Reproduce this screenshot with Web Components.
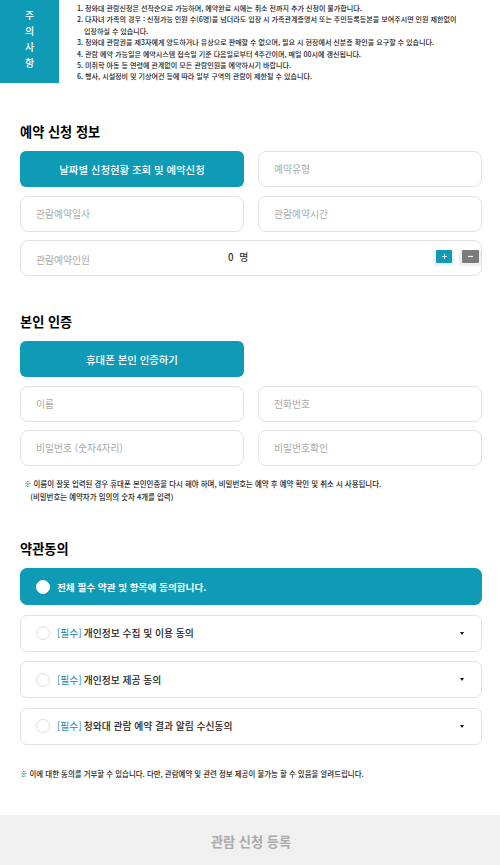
<!DOCTYPE html>
<html lang="ko">
<head>
<meta charset="utf-8">
<title>관람 신청</title>
<style>
  html, body { margin: 0; padding: 0; background: #fff; }
  body { width: 500px; font-family: "Noto Sans CJK KR", "Noto Sans", sans-serif; color: #111; }
</style>
</head>
<body>
<rv-notice></rv-notice>

<rv-section heading="예약 신청 정보" top="39">
  <rv-button>날짜별 신청현황 조회 및 예약신청</rv-button>
  <rv-field>예약유형</rv-field>
  <rv-field>관람예약일사</rv-field>
  <rv-field>관람예약시간</rv-field>
  <rv-counter label="관람예약인원" value="0" unit="명"></rv-counter>
</rv-section>

<rv-section heading="본인 인증" top="36">
  <rv-button>휴대폰 본인 인증하기</rv-button>
  <span></span>
  <rv-field>이름</rv-field>
  <rv-field>전화번호</rv-field>
  <rv-field>비밀번호 (숫자4자리)</rv-field>
  <rv-field>비밀번호확인</rv-field>
  <rv-note slot="after">※ 이름이 잘못 입력된 경우 휴대폰 본인인증을 다시 해야 하며, 비밀번호는 예약 후 예약 확인 및 취소 시 사용됩니다.<br>&nbsp;&nbsp;&nbsp;(비밀번호는 예약자가 임의의 숫자 4개를 입력)</rv-note>
</rv-section>

<rv-terms>
  <rv-agree all>전체 필수 약관 및 항목에 동의합니다.</rv-agree>
  <rv-agree>개인정보 수집 및 이용 동의</rv-agree>
  <rv-agree>개인정보 제공 동의</rv-agree>
  <rv-agree>청와대 관람 예약 결과 알림 수신동의</rv-agree>
</rv-terms>

<rv-submit>관람 신청 등록</rv-submit>

<script>
  const FONT = '"Noto Sans CJK KR", "Noto Sans", sans-serif';
  const TEAL = '#0f9ab5';

  // 상단 주의사항 박스
  class RvNotice extends HTMLElement {
    connectedCallback() {
      const lines = [
        '1. 청와대 관람신청은 선착순으로 가능하며, 예약완료 시에는 취소 전까지 추가 신청이 불가합니다.',
        '2. 다자녀 가족의 경우 : 신청가능 인원 수(6명)을 넘더라도 입장 시 가족관계증명서 또는 주민등록등본을 보여주시면 인원 제한없이',
        '<span class="in">입장하실 수 있습니다.</span>',
        '3. 청와대 관람권을 제3자에게 양도하거나 유상으로 판매할 수 없으며, 필요 시 현장에서 신분증 확인을 요구할 수 있습니다.',
        '4. 관람 예약 가능일은 예약시스템 접속일 기준 다음일로부터 4주간이며, 매일 00시에 갱신됩니다.',
        '5. 미취학 아동 등 연령에 관계없이 모든 관람인원을 예약하시기 바랍니다.',
        '6. 행사, 시설정비 및 기상여건 등에 따라 일부 구역의 관람이 제한될 수 있습니다.'
      ];
      this.attachShadow({ mode: 'open' }).innerHTML = `
        <style>
          :host { display: flex; height: 83px; font-family: ${FONT}; }
          .tag {
            width: 59px; background: ${TEAL}; color: #fff;
            display: flex; flex-direction: column; align-items: center; justify-content: center;
            font-size: 10px; font-weight: 500; line-height: 16.2px; padding-bottom: 5px; box-sizing: border-box;
          }
          .list { padding: 3px 0 0 18px; font-size: 7.05px; line-height: 11.4px; color: #222; white-space: nowrap; font-weight: 500; }
          .in { padding-left: 7px; }
        </style>
        <div class="tag"><span>주</span><span>의</span><span>사</span><span>항</span></div>
        <div class="list">${lines.map(l => `<div>${l}</div>`).join('')}</div>`;
    }
  }

  // 섹션: 제목 + 2열 그리드
  class RvSection extends HTMLElement {
    connectedCallback() {
      const top = this.getAttribute('top') || 0;
      this.attachShadow({ mode: 'open' }).innerHTML = `
        <style>
          :host { display: block; padding: ${top}px 18px 0 20px; font-family: ${FONT}; }
          h2 { margin: 0 0 10px; font-size: 13.2px; line-height: 19px; font-weight: 700; color: #000; }
          .grid { display: grid; grid-template-columns: 224px 224px; column-gap: 14px; row-gap: 8.5px; }
        </style>
        <h2>${this.getAttribute('heading')}</h2>
        <div class="grid"><slot></slot></div>
        <slot name="after"></slot>`;
    }
  }

  class RvButton extends HTMLElement {
    connectedCallback() {
      this.attachShadow({ mode: 'open' }).innerHTML = `
        <style>
          :host {
            display: flex; align-items: center; justify-content: center; height: 36px;
            background: ${TEAL}; color: #fff; border-radius: 6px;
            font-size: 10.4px; font-weight: 500;
          }
        </style>
        <slot></slot>`;
    }
  }

  class RvField extends HTMLElement {
    connectedCallback() {
      this.attachShadow({ mode: 'open' }).innerHTML = `
        <style>
          :host {
            display: flex; align-items: center; height: 36px; box-sizing: border-box;
            border: 1px solid #e2e2e2; border-radius: 8px; padding: 0 15px;
            background: #fff; color: #aaa; font-size: 9.8px;
          }
        </style>
        <slot></slot>`;
    }
  }

  // 인원 선택 행
  class RvCounter extends HTMLElement {
    connectedCallback() {
      this.attachShadow({ mode: 'open' }).innerHTML = `
        <style>
          :host {
            grid-column: 1 / 3; display: flex; align-items: center; height: 36px; box-sizing: border-box;
            border: 1px solid #e2e2e2; border-radius: 8px; padding: 0 0 0 15px; background: #fff;
          }
          .label { width: 192px; color: #aaa; font-size: 9.8px; padding-top: 3px; }
          .val { color: #333; font-size: 9.8px; font-weight: 500; letter-spacing: 0.4px; word-spacing: 2px; margin-bottom: 2px; }
          .btns { margin-left: auto; display: flex; gap: 4px; }
          .b { width: 22px; height: 16px; display: flex; justify-content: center; background: #eef3f5; }
          .b i { width: 16px; height: 13px; display: flex; align-items: center; justify-content: center; border-radius: 1px; }
          .plus i { background: ${TEAL}; }
          .minus { background: #efefef; }
          .minus i { background: #7b7b7b; width: 17px; }
          svg { display: block; }
        </style>
        <span class="label">${this.getAttribute('label')}</span>
        <span class="val">${this.getAttribute('value')} ${this.getAttribute('unit')}</span>
        <div class="btns">
          <div class="b plus"><i><svg width="7" height="7" viewBox="0 0 7 7"><path d="M3.5 1v5M1 3.5h5" stroke="#dff3f7" stroke-width="1"/></svg></i></div>
          <div class="b minus"><i><svg width="7" height="7" viewBox="0 0 7 7"><path d="M1 3.5h5" stroke="#eee" stroke-width="1.2"/></svg></i></div>
        </div>`;
    }
  }

  class RvNote extends HTMLElement {
    connectedCallback() {
      this.attachShadow({ mode: 'open' }).innerHTML = `
        <style>
          :host { display: block; margin: 11px 0 0 4px; font-size: 7.45px; line-height: 13px; color: #222; white-space: nowrap; font-weight: 500; }
        </style>
        <slot></slot>`;
    }
  }

  class RvTerms extends HTMLElement {
    connectedCallback() {
      this.attachShadow({ mode: 'open' }).innerHTML = `
        <style>
          :host { display: block; padding: 36px 18px 0 20px; font-family: ${FONT}; }
          h2 { margin: 0 0 10px; font-size: 13.2px; line-height: 19px; font-weight: 700; color: #000; }
          .list { display: flex; flex-direction: column; gap: 9.5px; }
          p { margin: 22px 0 0; font-size: 7.45px; line-height: 13px; color: #222; white-space: nowrap; font-weight: 500; }
        </style>
        <h2>약관동의</h2>
        <div class="list"><slot></slot></div>
        <p>※ 이에 대한 동의를 거부할 수 있습니다. 다만, 관람예약 및 관련 정보 제공이 불가능 할 수 있음을 알려드립니다.</p>`;
    }
  }

  // 약관 항목 (all 속성이면 전체동의 스타일)
  class RvAgree extends HTMLElement {
    connectedCallback() {
      const all = this.hasAttribute('all');
      this.attachShadow({ mode: 'open' }).innerHTML = `
        <style>
          :host {
            display: flex; align-items: center; height: 37px; box-sizing: border-box;
            border-radius: 7px; padding: 0 17px 0 15px; font-size: ${all ? 9.65 : 9.8}px;
            border: 1px solid ${all ? TEAL : '#e2e2e2'};
            background: ${all ? TEAL : '#fff'}; color: ${all ? '#fff' : '#222'};
            font-weight: ${all ? 700 : 500};
          }
          .dot {
            width: 14px; height: 14px; border-radius: 50%; box-sizing: border-box; margin-right: 7px; flex: none;
            background: #fff; border: 1px solid ${all ? '#fff' : '#dedede'};
          }
          .req { color: #1f8ba5; font-weight: 400; margin-right: 2px; }
          .arrow { margin-left: auto; width: 0; height: 0; border: 2.5px solid transparent; border-top: 3px solid #111; border-bottom: 0; }
        </style>
        <span class="dot"></span>
        ${all ? '' : '<span class="req">[필수]</span>'}
        <span><slot></slot></span>
        ${all ? '' : '<span class="arrow"></span>'}`;
    }
  }

  class RvSubmit extends HTMLElement {
    connectedCallback() {
      this.attachShadow({ mode: 'open' }).innerHTML = `
        <style>
          :host {
            display: flex; align-items: center; justify-content: center; height: 50px; margin-top: 35px;
            background: #f0f0f0; color: #aaa; font-size: 13.2px; font-weight: 700; font-family: ${FONT}; padding: 3px 0 0 2px; box-sizing: border-box;
          }
        </style>
        <slot></slot>`;
    }
  }

  customElements.define('rv-notice', RvNotice);
  customElements.define('rv-section', RvSection);
  customElements.define('rv-button', RvButton);
  customElements.define('rv-field', RvField);
  customElements.define('rv-counter', RvCounter);
  customElements.define('rv-note', RvNote);
  customElements.define('rv-terms', RvTerms);
  customElements.define('rv-agree', RvAgree);
  customElements.define('rv-submit', RvSubmit);
</script>
</body>
</html>
